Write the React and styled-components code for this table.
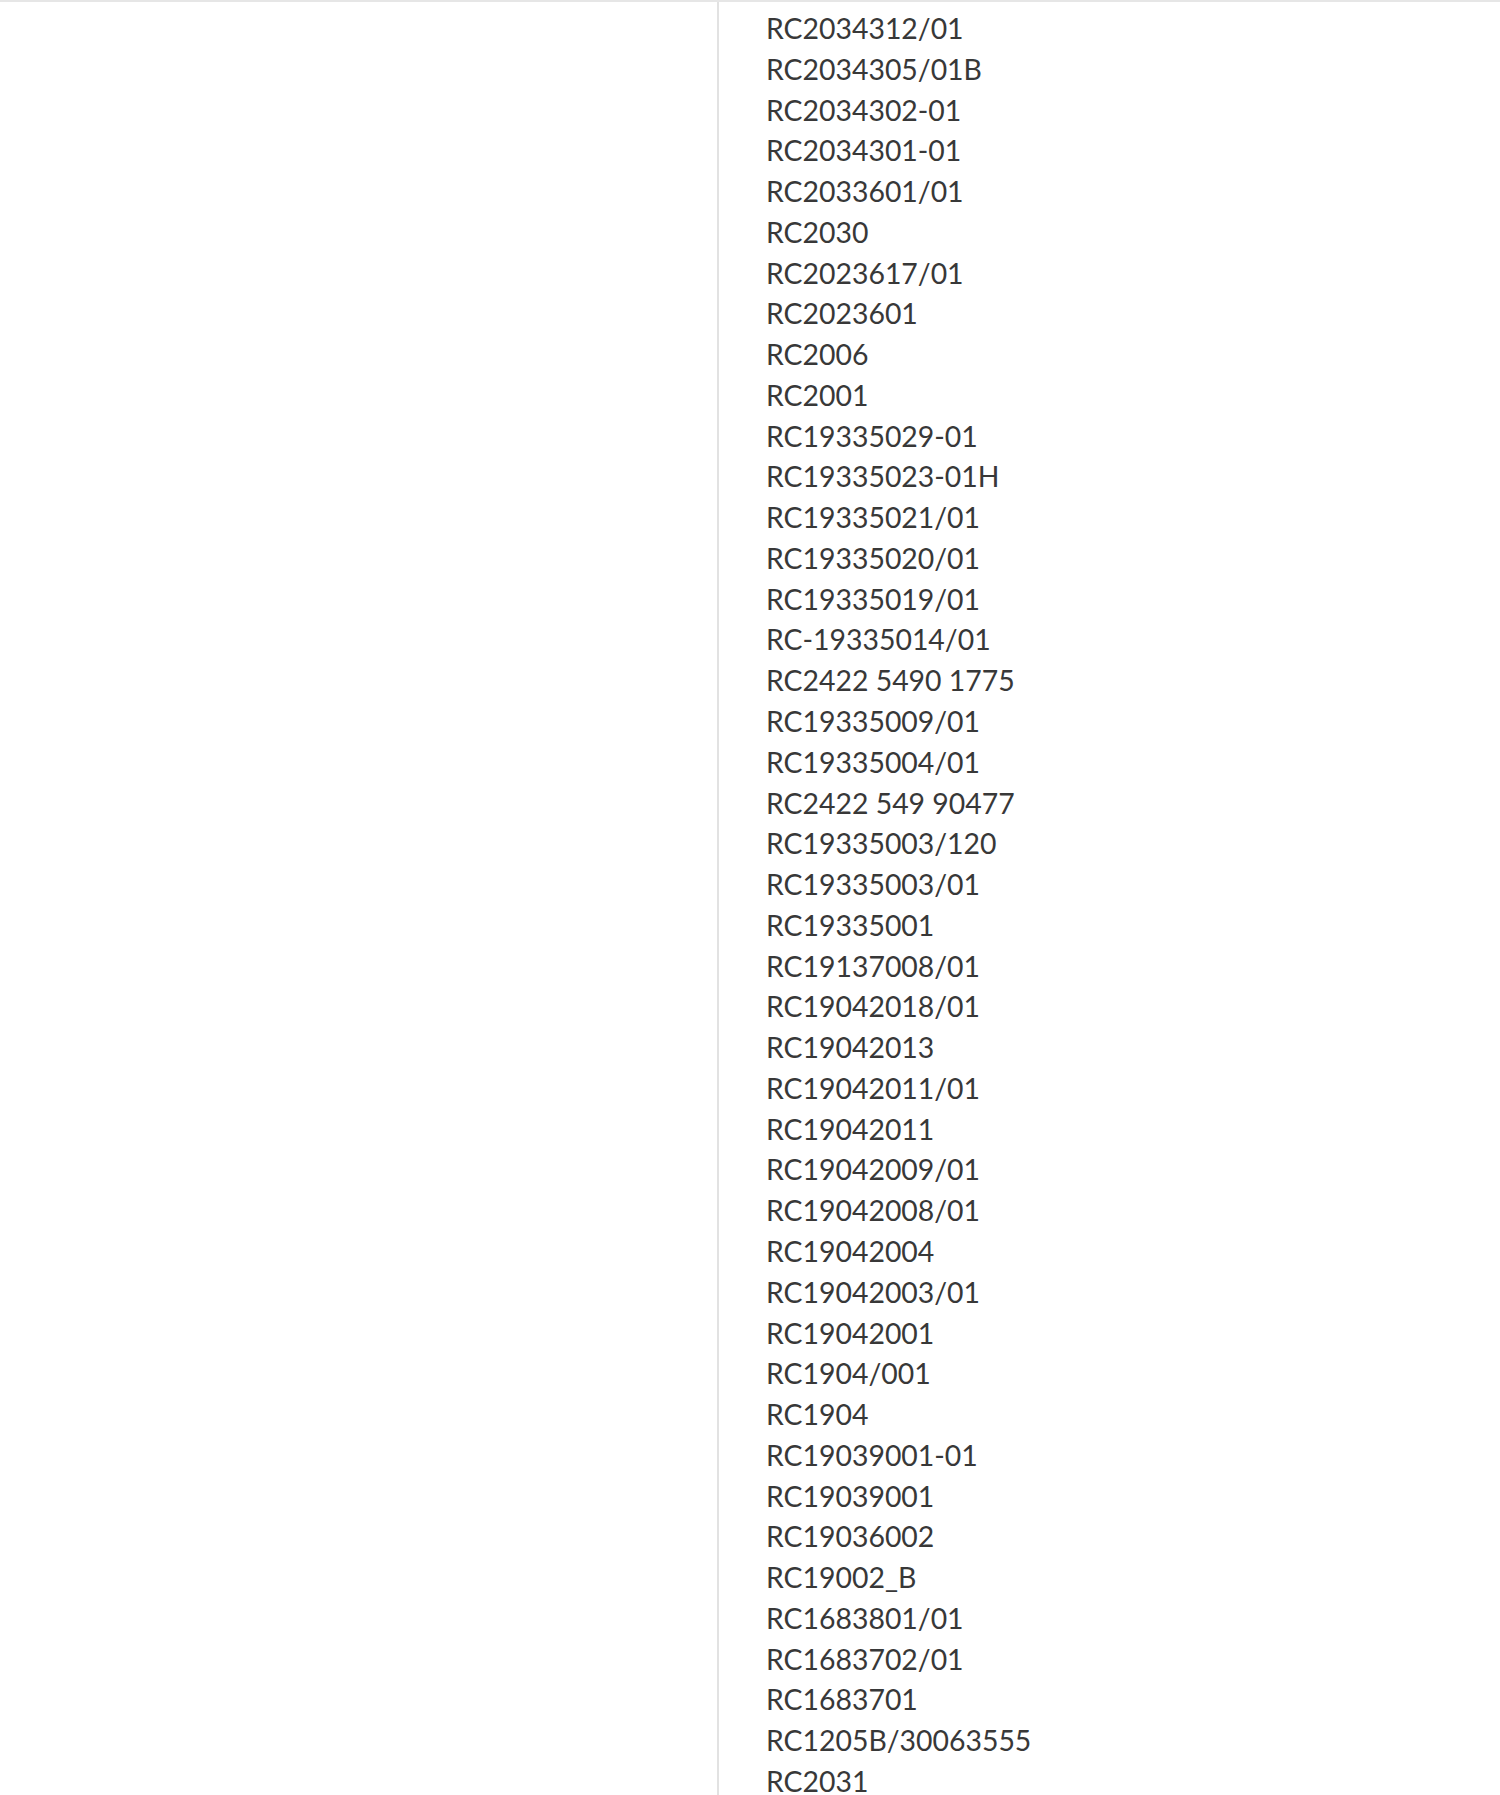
import React from "react";
import styled, { createGlobalStyle } from "styled-components";

const Global = createGlobalStyle`
  html, body { margin: 0; padding: 0; background: #fff; }
  body { font-family: Lato, "Open Sans", sans-serif; }
`;

const Page = styled.div`
  display: grid;
  grid-template-columns: 719px 1fr;
  min-height: 1795px;
  border-top: 2px solid #e6e6e6;
  box-sizing: border-box;
`;

const Side = styled.aside`
  border-right: 2px solid #e2e2e2;
`;

const List = styled.ul`
  list-style: none;
  margin: 0;
  padding: 6px 0 0 47px;
`;

const Item = styled.li`
  font-family: Lato, sans-serif;
  font-size: 28.4px;
  line-height: 40.77px;
  color: #383838;
  white-space: nowrap;
`;

const codes = [
  "RC2034312/01",
  "RC2034305/01B",
  "RC2034302-01",
  "RC2034301-01",
  "RC2033601/01",
  "RC2030",
  "RC2023617/01",
  "RC2023601",
  "RC2006",
  "RC2001",
  "RC19335029-01",
  "RC19335023-01H",
  "RC19335021/01",
  "RC19335020/01",
  "RC19335019/01",
  "RC-19335014/01",
  "RC2422 5490 1775",
  "RC19335009/01",
  "RC19335004/01",
  "RC2422 549 90477",
  "RC19335003/120",
  "RC19335003/01",
  "RC19335001",
  "RC19137008/01",
  "RC19042018/01",
  "RC19042013",
  "RC19042011/01",
  "RC19042011",
  "RC19042009/01",
  "RC19042008/01",
  "RC19042004",
  "RC19042003/01",
  "RC19042001",
  "RC1904/001",
  "RC1904",
  "RC19039001-01",
  "RC19039001",
  "RC19036002",
  "RC19002_B",
  "RC1683801/01",
  "RC1683702/01",
  "RC1683701",
  "RC1205B/30063555",
  "RC2031",
];

export default function App() {
  return (
    <>
      <Global />
      <Page>
        <Side />
        <List>
          {codes.map((c, i) => (
            <Item key={i}>{c}</Item>
          ))}
        </List>
      </Page>
    </>
  );
}
